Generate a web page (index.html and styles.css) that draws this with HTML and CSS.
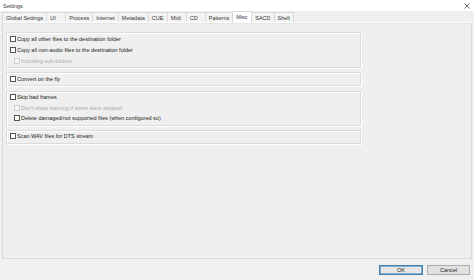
FILE: index.html
```html
<!DOCTYPE html>
<html>
<head>
<meta charset="utf-8">
<link rel="stylesheet" href="styles.css">
</head>
<body>
<div class="window">
  <div class="titlebar">
    <span class="title">Settings</span>
    <svg class="close" width="6" height="6" viewBox="0 0 6 6"><path d="M0.5 0.5L5.5 5.5M5.5 0.5L0.5 5.5" stroke="#333" stroke-width="0.7" fill="none"/></svg>
  </div>
  <div class="tabs">
    <div class="tab">Global Settings</div>
    <div class="tab">UI</div>
    <div class="tab">Process</div>
    <div class="tab">Internet</div>
    <div class="tab">Metadata</div>
    <div class="tab">CUE</div>
    <div class="tab">Midi</div>
    <div class="tab">CD</div>
    <div class="tab">Patterns</div>
    <div class="tab active">Misc</div>
    <div class="tab">SACD</div>
    <div class="tab">Shell</div>
  </div>
  <div class="panel">
    <div class="group">
      <label class="row"><span class="cb"></span>Copy all other files to the destination folder</label>
      <label class="row"><span class="cb"></span>Copy all non-audio files to the destination folder</label>
      <label class="row sub disabled"><span class="cb"></span>Including sub-folders</label>
    </div>
    <div class="group">
      <label class="row"><span class="cb"></span>Convert on the fly</label>
    </div>
    <div class="group g3">
      <label class="row"><span class="cb"></span>Skip bad frames</label>
      <label class="row sub disabled"><span class="cb"></span>Don't show warning if some were skipped</label>
      <label class="row sub"><span class="cb"></span>Delete damaged/not supported files (when configured so)</label>
    </div>
    <div class="group">
      <label class="row"><span class="cb"></span>Scan WAV files for DTS stream</label>
    </div>
  </div>
  <div class="footer">
    <div class="btn default">OK</div>
    <div class="btn">Cancel</div>
  </div>
</div>
</body>
</html>
```
FILE: styles.css
```css
html, body {
  margin: 0;
  padding: 0;
}
body {
  width: 474px;
  height: 280px;
  overflow: hidden;
  background: #f0f0f0;
  font-family: "Liberation Sans", Arial, sans-serif;
  font-size: 5.5px;
  color: #222;
}
.window {
  display: flex;
  flex-direction: column;
  height: 280px;
}
.titlebar {
  height: 11px;
  background: #ffffff;
  display: flex;
  align-items: center;
  justify-content: space-between;
  padding: 0 4px 0 3px;
  flex: none;
}
.title {
  color: #333;
}
.close {
  display: block;
}
.tabs {
  height: 11px;
  display: flex;
  align-items: flex-end;
  padding-left: 2px;
  flex: none;
  position: relative;
  z-index: 1;
}
.tab {
  height: 10px;
  line-height: 10px;
  min-width: 20px;
  padding: 0 3px;
  background: #f3f3f3;
  border: 1px solid #dadada;
  border-bottom: none;
  margin-right: -1px;
  box-sizing: border-box;
  color: #333;
  white-space: nowrap;
}
.tab.active {
  height: 12px;
  line-height: 11px;
  background: #ffffff;
  margin-bottom: -1px;
  position: relative;
  z-index: 2;
}
.panel {
  flex: 1;
  margin: 0 2px;
  border: 1px solid #dadada;
  border-top: 1px solid #ffffff;
  box-shadow: inset 0 1px 0 #e6e6e6;
  background: #efefef;
  padding: 9px 0 0 3px;
  display: flex;
  flex-direction: column;
  gap: 4px;
}
.group {
  width: 355px;
  box-sizing: border-box;
  border: 1px solid #dcdcdc;
  box-shadow: inset 1px 1px 0 #ffffff, 1px 1px 0 #ffffff;
  padding: 0 0 1px 3px;
  display: flex;
  flex-direction: column;
}
.group.g3 {
  margin-top: 1px;
}
.row {
  height: 11px;
  display: flex;
  align-items: center;
  gap: 1px;
  white-space: nowrap;
  color: #222;
}
.g3 .row {
  height: 10.5px;
}
.cb {
  width: 6px;
  height: 6px;
  box-sizing: border-box;
  border: 0.8px solid #555;
  background: #fff;
  flex: none;
}
.row.sub {
  padding-left: 4px;
}
.row.disabled {
  color: #ababab;
}
.row.disabled .cb {
  border-color: #cfcfcf;
  background: #f7f7f7;
}
.footer {
  height: 21px;
  flex: none;
  display: flex;
  justify-content: flex-end;
  align-items: flex-start;
  padding: 6px 4px 0 0;
  gap: 4px;
  box-sizing: border-box;
}
.btn {
  width: 43px;
  height: 10px;
  box-sizing: border-box;
  border: 1px solid #adadad;
  background: #e1e1e1;
  display: flex;
  align-items: center;
  justify-content: center;
  color: #222;
}
.btn.default {
  width: 44px;
  border-color: #3c7fb1;
  box-shadow: inset 0 0 0 0.5px #3c7fb1;
  background: #e5e5e5;
}
```
